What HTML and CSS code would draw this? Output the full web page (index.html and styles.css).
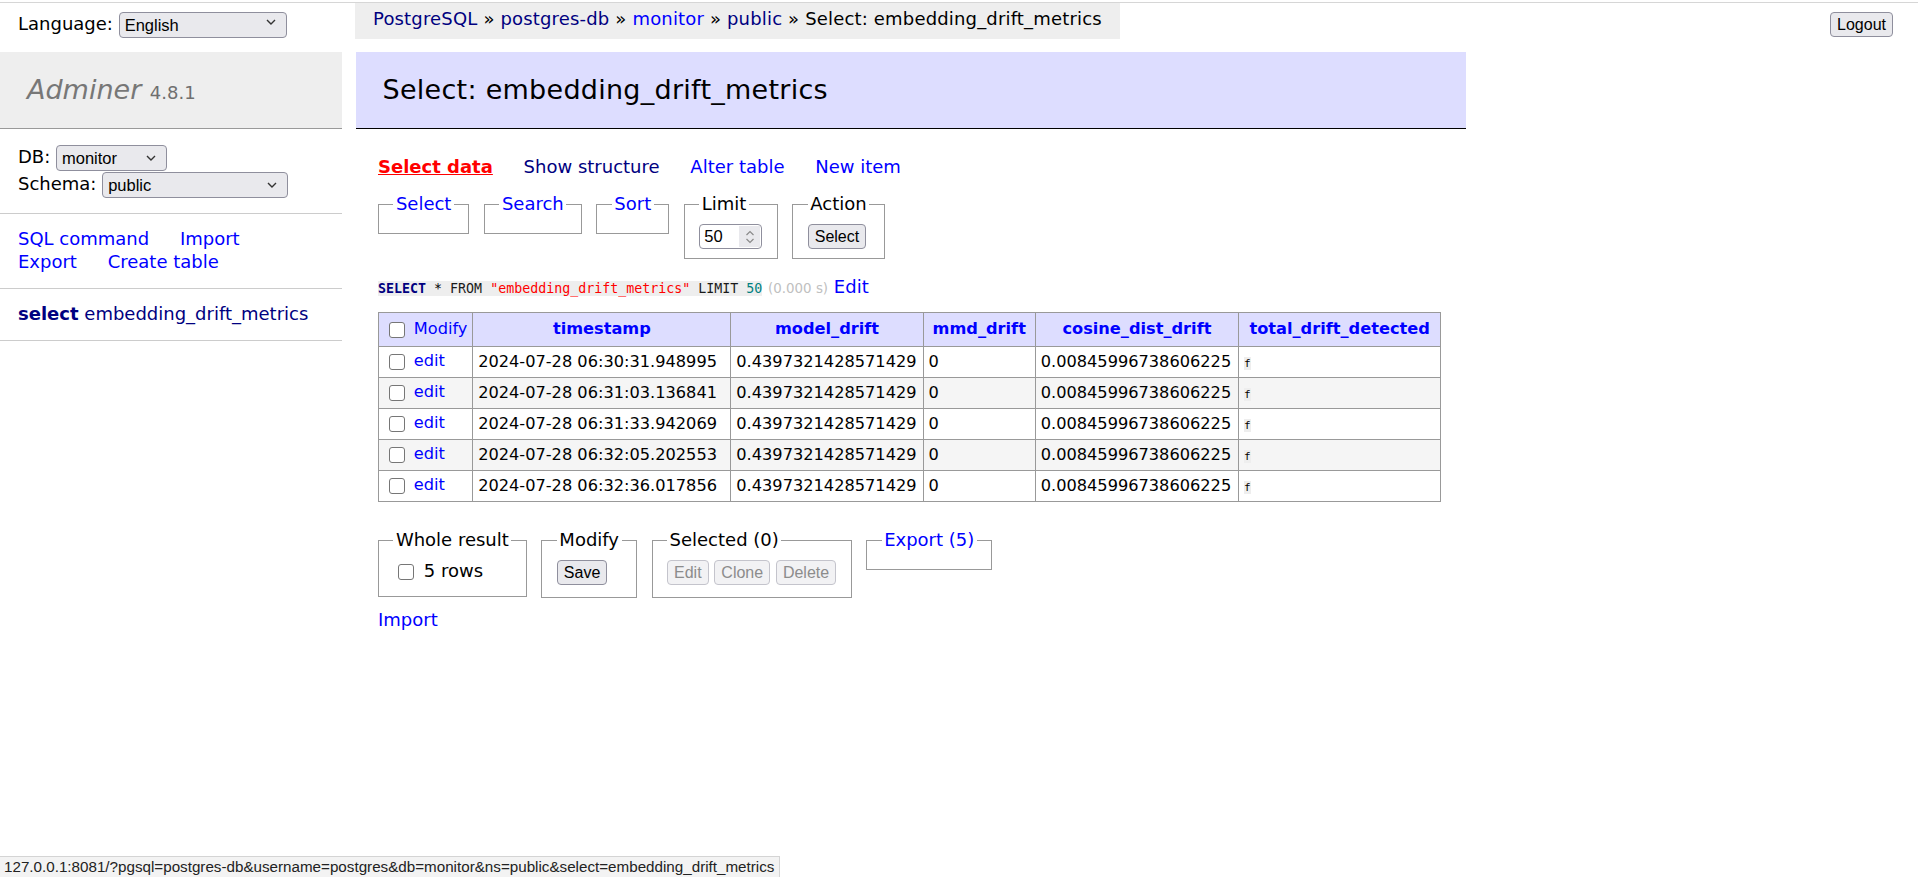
FILE: index.html
```html
<!DOCTYPE html>
<html lang="en">
<head>
<meta charset="utf-8">
<title>Select: embedding_drift_metrics - postgres-db - Adminer</title>
<link rel="stylesheet" href="styles.css">
</head>
<body>
<div class="top">
  <form class="lang">Language: <span class="selwrap"><select class="sel sel-lang"><option>English</option></select><svg class="chev" width="10" height="6" viewBox="0 0 10 6"><path d="M1 1l4 4 4-4" fill="none" stroke="#333" stroke-width="1.4"/></svg></span></form>
  <p class="breadcrumb"><a class="v" href="#">PostgreSQL</a> » <a class="v" href="#">postgres-db</a> » <a href="#">monitor</a> » <a class="v" href="#">public</a> » Select: embedding_drift_metrics</p>
  <form class="logout"><button type="button" class="btn">Logout</button></form>
</div>

<div class="main">
  <div class="menu">
    <h1><a class="h1link" href="#">Adminer</a> <span class="version">4.8.1</span></h1>
    <form class="menu-p dbs">
      DB: <span class="selwrap"><select class="sel sel-db"><option>monitor</option></select><svg class="chev" width="10" height="6" viewBox="0 0 10 6"><path d="M1 1l4 4 4-4" fill="none" stroke="#333" stroke-width="1.4"/></svg></span><br>
      Schema: <span class="selwrap"><select class="sel sel-schema"><option>public</option></select><svg class="chev" width="10" height="6" viewBox="0 0 10 6"><path d="M1 1l4 4 4-4" fill="none" stroke="#333" stroke-width="1.4"/></svg></span>
    </form>
    <p class="menu-p links"><a href="#">SQL command</a> <a href="#">Import</a><br><a href="#">Export</a> <a href="#">Create table</a></p>
    <ul class="menu-p tables">
      <li><a class="v sel-link" href="#">select</a> <a class="v" href="#">embedding_drift_metrics</a></li>
    </ul>
  </div>

  <div class="content">
    <h2>Select: embedding_drift_metrics</h2>
    <p class="links"><a class="hover" href="#">Select data</a> <a class="v" href="#">Show structure</a> <a href="#">Alter table</a> <a href="#">New item</a></p>

    <form class="selform">
      <fieldset><legend><a href="#">Select</a></legend></fieldset>
      <fieldset><legend><a href="#">Search</a></legend></fieldset>
      <fieldset><legend><a href="#">Sort</a></legend></fieldset>
      <fieldset><legend>Limit</legend><div><span class="num"><input class="num-in" type="text" value="50"><span class="spin"><svg width="10" height="16" viewBox="0 0 10 16"><path d="M1.5 6l3.5-3.5 3.5 3.5M1.5 10l3.5 3.5 3.5-3.5" fill="none" stroke="#8a8a8a" stroke-width="1.2"/></svg></span></span></div></fieldset>
      <fieldset><legend>Action</legend><div><button type="button" class="btn">Select</button></div></fieldset>
    </form>

    <p class="sqlline"><code class="jush"><span class="kw">SELECT</span> * <span class="kw2">FROM</span> <span class="str">"embedding_drift_metrics"</span> <span class="kw2">LIMIT</span> <span class="numv">50</span></code> <span class="time">(0.000 s)</span> <a href="#">Edit</a></p>

    <table class="data">
      <thead>
        <tr>
          <td class="modcol"><input type="checkbox" class="cb"> <a href="#">Modify</a></td>
          <th class="c-ts"><a href="#">timestamp</a></th>
          <th class="c-md"><a href="#">model_drift</a></th>
          <th class="c-mmd"><a href="#">mmd_drift</a></th>
          <th class="c-cos"><a href="#">cosine_dist_drift</a></th>
          <th class="c-tot"><a href="#">total_drift_detected</a></th>
        </tr>
      </thead>
      <tbody>
        <tr><td><input type="checkbox" class="cb"> <a href="#">edit</a></td><td>2024-07-28 06:30:31.948995</td><td>0.4397321428571429</td><td>0</td><td>0.00845996738606225</td><td><code class="bool">f</code></td></tr>
        <tr><td><input type="checkbox" class="cb"> <a href="#">edit</a></td><td>2024-07-28 06:31:03.136841</td><td>0.4397321428571429</td><td>0</td><td>0.00845996738606225</td><td><code class="bool">f</code></td></tr>
        <tr><td><input type="checkbox" class="cb"> <a href="#">edit</a></td><td>2024-07-28 06:31:33.942069</td><td>0.4397321428571429</td><td>0</td><td>0.00845996738606225</td><td><code class="bool">f</code></td></tr>
        <tr><td><input type="checkbox" class="cb"> <a href="#">edit</a></td><td>2024-07-28 06:32:05.202553</td><td>0.4397321428571429</td><td>0</td><td>0.00845996738606225</td><td><code class="bool">f</code></td></tr>
        <tr><td><input type="checkbox" class="cb"> <a href="#">edit</a></td><td>2024-07-28 06:32:36.017856</td><td>0.4397321428571429</td><td>0</td><td>0.00845996738606225</td><td><code class="bool">f</code></td></tr>
      </tbody>
    </table>

    <div class="footer">
      <div class="footer-in">
        <fieldset><legend>Whole result</legend><div><label><input type="checkbox" class="cb"> 5 rows</label></div></fieldset>
        <fieldset><legend>Modify</legend><div><button type="button" class="btn">Save</button></div></fieldset>
        <fieldset><legend>Selected <span>(0)</span></legend><div><button type="button" class="btn" disabled>Edit</button> <button type="button" class="btn" disabled>Clone</button> <button type="button" class="btn" disabled>Delete</button></div></fieldset>
        <fieldset><legend><a href="#">Export <span>(5)</span></a></legend></fieldset>
      </div>
    </div>
    <div class="import"><a href="#">Import</a></div>
  </div>
</div>

<div class="status">127.0.0.1:8081/?pgsql=postgres-db&amp;username=postgres&amp;db=monitor&amp;ns=public&amp;select=embedding_drift_metrics</div>
</body>
</html>
```

FILE: styles.css
```css
html {
  background: #fff;
}

body {
  margin: 2px 0 0;
  border-top: 1px solid #d6d6d6;
  font: 18px/1.25 "DejaVu Sans", Verdana, sans-serif;
  color: #000;
  background: #fff;
  min-height: 860px;
}

a {
  color: blue;
  text-decoration: none;
}

a.v {
  color: navy;
}

a.hover {
  color: red;
  text-decoration: underline;
  font-weight: bold;
}

/* ---------- top bar ---------- */
.top {
  display: flex;
  align-items: flex-start;
  height: 36px;
}

.lang {
  flex: none;
  width: 319px;
  margin: 0;
  padding: 5.4px 18px;
  line-height: 32.4px;
  white-space: nowrap;
}

.breadcrumb {
  flex: none;
  margin: 0;
  height: 36px;
  line-height: 32.4px;
  padding: 0 18px;
  background: #eee;
  white-space: nowrap;
  letter-spacing: 0.17px;
}

.logout {
  margin: 9px 25px 0 auto;
}

/* ---------- form controls ---------- */
.selwrap {
  position: relative;
  display: inline-block;
  vertical-align: middle;
}

.sel {
  -webkit-appearance: none;
  appearance: none;
  font: 16.5px "Liberation Sans", Arial, sans-serif;
  color: #000;
  background: #e9e9ed;
  border: 1px solid #8f8f9d;
  border-radius: 4px;
  height: 26px;
  padding: 0 24px 0 5px;
  margin: 0;
  box-sizing: border-box;
}

.sel-lang { width: 168px; }
.sel-db { width: 111px; }
.sel-schema { width: 186px; }

.chev {
  position: absolute;
  right: 11px;
  top: 10px;
  pointer-events: none;
}

.btn {
  font: 16px "Liberation Sans", Arial, sans-serif;
  color: #000;
  background: #e9e9ed;
  border: 1px solid #8f8f9d;
  border-radius: 4px;
  padding: 0 6px;
  margin: 0;
  height: 25px;
  line-height: 23px;
  vertical-align: middle;
}

.btn:disabled {
  color: #8c8c8c;
  background: #f2f2f4;
  border-color: #c4c4cc;
}

.cb {
  -webkit-appearance: none;
  appearance: none;
  width: 16px;
  height: 16px;
  box-sizing: border-box;
  border: 1.5px solid #767676;
  border-radius: 3px;
  background: #fff;
  margin: 3.75px 3.75px 3.75px 5px;
  vertical-align: middle;
}

.num {
  display: inline-flex;
  vertical-align: middle;
  width: 61px;
  height: 23px;
  border: 1px solid #8f8f9d;
  border-radius: 4px;
  background: #fff;
  overflow: hidden;
}

.num-in {
  flex: 1;
  min-width: 0;
  border: 0;
  padding: 0 0 0 4px;
  margin: 0;
  font: 16.5px "Liberation Sans", Arial, sans-serif;
  background: transparent;
  outline: none;
}

.spin {
  flex: none;
  width: 21px;
  margin: 1px 1px 1px 0;
  background: #e9e9ed;
  display: flex;
  align-items: center;
  justify-content: center;
}

/* ---------- main layout ---------- */
.main {
  display: flex;
  align-items: flex-start;
  margin-top: 12.5px;
}

.menu {
  flex: none;
  width: 342px;
  margin-right: 36px;
}

.menu h1 {
  font-size: 27px;
  font-weight: normal;
  margin: 0;
  padding: 21.6px 27px;
  border-bottom: 1px solid #999;
  color: #777;
  background: #eee;
}

.h1link {
  color: #777;
  font-style: italic;
}

.version {
  font-size: 18px;
  color: #6f6f6f;
}

.menu-p {
  margin: 0;
  padding: 14.4px 18px;
  border-bottom: 1px solid #ccc;
}

.dbs {
  line-height: 26.5px;
}

.menu .links a {
  margin-right: 25px;
  white-space: nowrap;
}

.tables {
  list-style: none;
}

.sel-link {
  font-weight: bold;
}

.content {
  flex: none;
  padding: 0 25px 25px 0;
}

h2 {
  font-size: 27px;
  font-weight: normal;
  margin: 0 0 26.5px -22.5px;
  padding: 21.6px 27px;
  border-bottom: 1px solid #000;
  color: #000;
  background: #ddf;
  letter-spacing: 0.27px;
}

.content .links {
  margin: 14.4px 25px 0 0;
}

.content .links a {
  margin-right: 25px;
  white-space: nowrap;
}

fieldset {
  display: inline-block;
  vertical-align: top;
  padding: 9px 14.4px;
  margin: 14.4px 9px 0 0;
  border: 1px solid #999;
  min-inline-size: 0;
}

legend {
  padding: 0 2.5px;
}

.sqlline {
  margin: 16.5px 25px 0 0;
}

.jush {
  font: 13.3px/1.25 "DejaVu Sans Mono", monospace;
  background: #eee;
  color: #000;
}

.jush .kw {
  color: navy;
  font-weight: bold;
}

.jush .kw2 {
  color: #1a1a1a;
}

.jush .str {
  color: red;
}

.jush .numv {
  color: #007f7f;
}

.time {
  color: silver;
  font-size: 13.4px;
}

/* ---------- table ---------- */
.data {
  border-collapse: collapse;
  font-size: 16.2px;
  margin: 13.7px 25px 0 0;
  white-space: nowrap;
}

.data td,
.data th {
  border: 1px solid #999;
  padding: 3.24px 4.86px;
  text-align: left;
}

.data thead th,
.data thead td {
  padding-top: 4.8px;
  padding-bottom: 4.8px;
}

.data thead th {
  text-align: center;
  padding-left: 8.1px;
  padding-right: 8.1px;
  background: #ddf;
}

.data thead td {
  background: #ddf;
}

.data .c-ts { width: 241px; }
.data .c-md { width: 175px; }
.data .c-mmd { width: 95px; }
.data .c-cos { width: 186px; }
.data .c-tot { width: 185px; }

.data tbody tr:nth-child(2n) {
  background: #f5f5f5;
}

.bool {
  font: 11px "DejaVu Sans Mono", monospace;
  background: #eee;
}

/* ---------- footer ---------- */
.footer {
  border-top: 27.5px solid #fff;
  margin-right: -25px;
}

.footer-in {
  background: #fff;
  padding: 0 0 11.5px;
}

.footer fieldset {
  margin-top: 0;
  padding-bottom: 11.5px;
}

.footer fieldset:last-child {
  padding-bottom: 9px;
}

.footer label {
  white-space: nowrap;
}

.import {
  line-height: 22.5px;
}

/* ---------- browser status tooltip ---------- */
.status {
  position: fixed;
  left: 0;
  bottom: 0;
  height: 20px;
  padding: 0 5px 0 4px;
  font: 15.2px/20px "Liberation Sans", Arial, sans-serif;
  color: #222;
  background: #f3f3f3;
  border-top: 1px solid #d4d4d4;
  border-right: 1px solid #d4d4d4;
  white-space: nowrap;
}
```
